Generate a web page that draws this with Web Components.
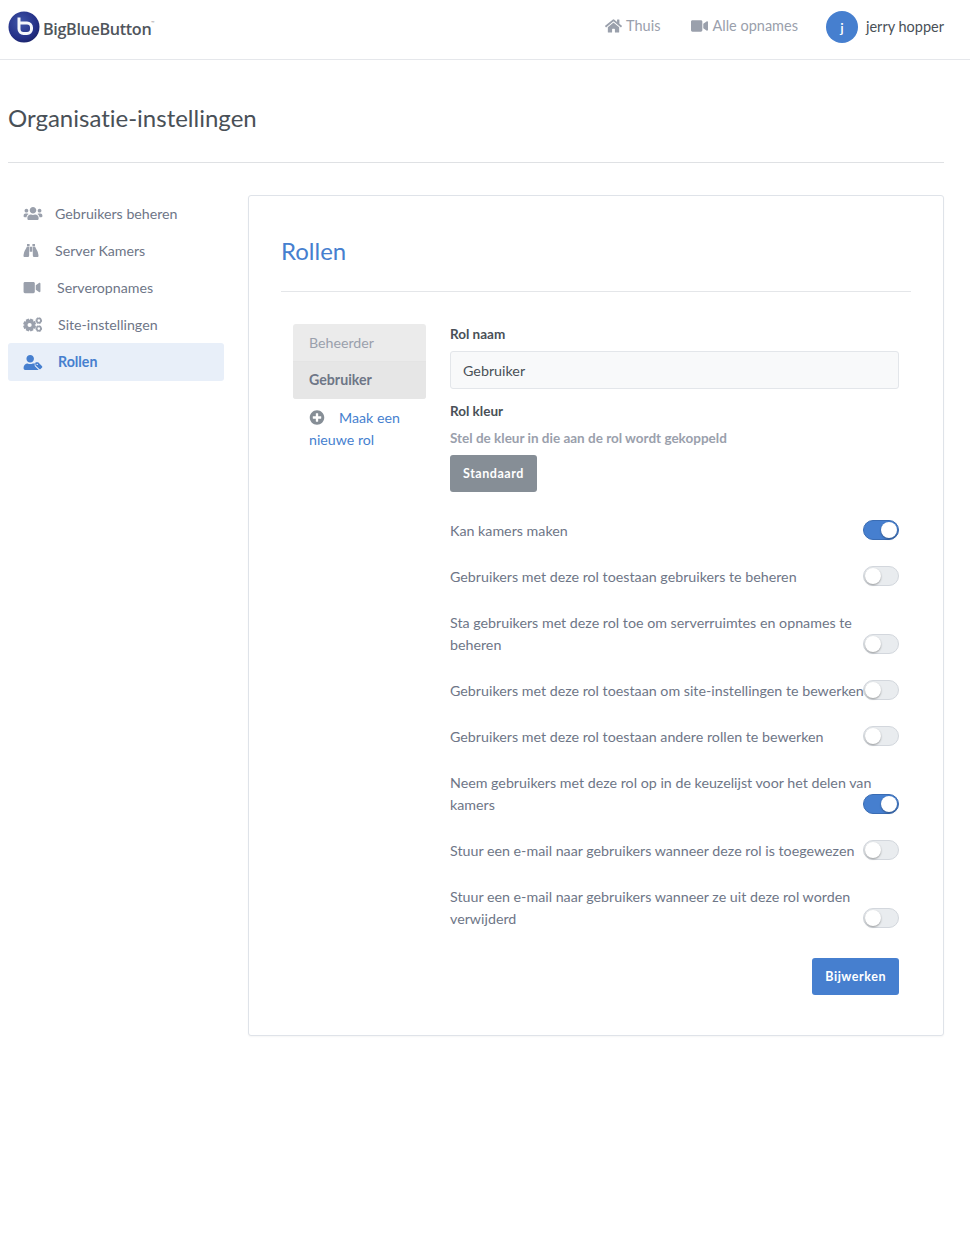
<!DOCTYPE html>
<html lang="nl"><head><meta charset="utf-8"><title>Organisatie-instellingen</title>
<style>
html,body{margin:0;padding:0;background:#fff}
body{font-family:"Lato","Open Sans","Liberation Sans",sans-serif;font-size:14.2px;line-height:22px;color:#495057;height:1237px;font-variant-ligatures:none}
</style></head><body>
<bbb-header></bbb-header>
<bbb-page></bbb-page>
<script>
const P={
 home:['0 0 576 512','M280.37 148.26L96 300.11V464a16 16 0 0 0 16 16l112.06-.29a16 16 0 0 0 15.92-16V368a16 16 0 0 1 16-16h64a16 16 0 0 1 16 16v95.64a16 16 0 0 0 16 16.05L464 480a16 16 0 0 0 16-16V300L295.67 148.26a12.19 12.19 0 0 0-15.3 0zM571.6 251.47L488 182.56V44.05a12 12 0 0 0-12-12h-56a12 12 0 0 0-12 12v72.61L318.47 43a48 48 0 0 0-61 0L4.34 251.47a12 12 0 0 0-1.6 16.9l25.5 31A12 12 0 0 0 45.15 301l235.22-193.74a12.19 12.19 0 0 1 15.3 0L530.9 301a12 12 0 0 0 16.9-1.6l25.5-31a12 12 0 0 0-1.7-16.93z'],
 video:['0 0 576 512','M336.2 64H47.8C21.4 64 0 85.4 0 111.8v288.4C0 426.6 21.4 448 47.8 448h288.4c26.4 0 47.8-21.4 47.8-47.8V111.8c0-26.4-21.4-47.8-47.8-47.8zm189.4 37.7L416 177.3v157.4l109.6 75.5c21.2 14.6 50.4-.3 50.4-25.8V127.5c0-25.4-29.1-40.4-50.4-25.8z'],
 users:['0 0 640 512','M96 224c35.3 0 64-28.7 64-64s-28.7-64-64-64-64 28.7-64 64 28.7 64 64 64zm448 0c35.3 0 64-28.7 64-64s-28.7-64-64-64-64 28.7-64 64 28.7 64 64 64zm32 32h-64c-17.6 0-33.5 7.1-45.1 18.6 40.3 22.1 68.9 62 75.1 109.4h66c17.7 0 32-14.3 32-32v-32c0-35.3-28.7-64-64-64zm-256 0c61.9 0 112-50.1 112-112S381.9 32 320 32 208 82.1 208 144s50.1 112 112 112zm76.8 32h-8.3c-20.8 10-43.9 16-68.5 16s-47.6-6-68.5-16h-8.3C179.6 288 128 339.6 128 403.2V432c0 26.5 21.5 48 48 48h288c26.5 0 48-21.5 48-48v-28.8c0-63.6-51.6-115.2-115.2-115.2zm-223.7-13.4C161.5 263.1 145.6 256 128 256H64c-35.3 0-64 28.7-64 64v32c0 17.7 14.3 32 32 32h65.9c6.3-47.4 34.9-87.3 75.2-109.4z'],
 binoculars:['0 0 512 512','M120 30h88v80h-88zM304 30h88v80h-88zM214 130h84v170h-84zM112 130h84v70c0 20-2 110-2 220 0 24-16 62-44 62H40c-24 0-40-16-40-40 0-30 10-80 28-140 20-66 70-110 84-172zM316 130h84c14 62 64 106 84 172 18 60 28 110 28 140 0 24-16 40-40 40H362c-28 0-44-38-44-62 0-110-2-200-2-220z'],
 plus:['0 0 512 512','M256 8C119 8 8 119 8 256s111 248 248 248 248-111 248-248S393 8 256 8zm144 276c0 6.6-5.4 12-12 12h-92v92c0 6.6-5.4 12-12 12h-56c-6.6 0-12-5.4-12-12v-92h-92c-6.6 0-12-5.4-12-12v-56c0-6.6 5.4-12 12-12h92v-92c0-6.6 5.4-12 12-12h56c6.6 0 12 5.4 12 12v92h92c6.6 0 12 5.4 12 12v56z'],
 usertag:['0 0 640 512','M224 256c70.7 0 128-57.3 128-128S294.7 0 224 0 96 57.3 96 128s57.3 128 128 128zM417 288H313c-27 14-57 22-89 22s-62-8-89-22h-1C60 288 0 348 0 422v42c0 26.5 21.5 48 48 48h480c-8 0-16-4-22-10L395 391c-12-12-18-28-18-45v-20c0-14 16-38 40-38zM630 385L505 260c-6-6-14-9-22-9H432c-18 0-32 14-32 32v51c0 8 3 16 9 22l125 125c12 12 32 12 44 0l52-52c12-12 12-32 0-44zM464 344a24 24 0 1 1 0-48 24 24 0 0 1 0 48z']
};
const svgIcon=(n,w,h)=>`<svg width="${w}" height="${h}" viewBox="${P[n][0]}" fill="currentColor" aria-hidden="true"><path fill-rule="evenodd" d="${P[n][1]}"/></svg>`;
function gear(cx,cy,ro,ri,hole,teeth,rot=0){
 let d='';const st=Math.PI*2/teeth;
 for(let k=0;k<teeth;k++){const a=k*st+rot;
  [[ri,-.5],[ro,-.3],[ro,.3],[ri,.5]].forEach(([r,f],j)=>{const t=a+f*st;d+=(k===0&&j===0?'M':'L')+(cx+r*Math.cos(t)).toFixed(2)+' '+(cy+r*Math.sin(t)).toFixed(2)});
 }
 d+=`zM${cx+hole} ${cy}a${hole} ${hole} 0 1 0 ${-2*hole} 0a${hole} ${hole} 0 1 0 ${2*hole} 0z`;
 return d;
}
const cogs=(w,h)=>`<svg width="${w}" height="${h}" viewBox="0 0 20 15" fill="currentColor" aria-hidden="true"><path fill-rule="evenodd" d="${gear(6.6,8,6.6,4.9,2.1,8,.39)}${gear(15.8,3.6,3.4,2.6,1.3,6)}${gear(15.8,11.6,3.4,2.6,1.3,6)}"/></svg>`;

class Base extends HTMLElement{
 constructor(){super();this.attachShadow({mode:'open'})}
 connectedCallback(){this.render()}
}
customElements.define('bbb-logo',class extends Base{render(){this.shadowRoot.innerHTML=`<style>
:host{display:flex;align-items:center;gap:3px}
span{font:600 16.2px/1 "Open Sans","Liberation Sans",sans-serif;color:#50555c;letter-spacing:-.35px;position:relative;top:2px}
sup{font-size:4px;color:#888;vertical-align:top}
</style>
<svg width="32" height="32" viewBox="0 0 32 32" aria-hidden="true"><defs><radialGradient id="g" cx=".4" cy=".35" r=".8"><stop offset="0" stop-color="#3f55a8"/><stop offset=".65" stop-color="#232f86"/><stop offset="1" stop-color="#141c58"/></radialGradient></defs><circle cx="16" cy="16" r="15.5" fill="url(#g)"/><path d="M11 6.5v11.5a4.5 4.5 0 0 0 4.5 4.5h3.5a4.5 4.5 0 0 0 4.5-4.5v-1.5a4.5 4.5 0 0 0-4.5-4.5h-8" fill="none" stroke="#f4f6fb" stroke-width="3"/></svg>
<span>BigBlueButton<sup>™</sup></span>`}});
customElements.define('bbb-nav-item',class extends Base{render(){const i=this.getAttribute('icon');this.shadowRoot.innerHTML=`<style>
:host{display:flex;align-items:center;gap:4px;color:#9aa0ac;font-size:14.5px;margin-top:-3px}
svg{display:block}
</style>${svgIcon(i,17,16)}<slot></slot>`}});
customElements.define('bbb-avatar',class extends Base{render(){this.shadowRoot.innerHTML=`<style>
:host{display:flex;align-items:center;gap:8px;color:#495057;font-size:14.5px}
i{width:32px;height:32px;border-radius:50%;background:#467fcf;color:#fff;display:flex;align-items:center;justify-content:center;font:600 14px Lato,sans-serif}
</style><i>${this.getAttribute('letter')}</i><slot></slot>`}});
customElements.define('bbb-header',class extends Base{render(){this.shadowRoot.innerHTML=`<style>
:host{display:flex;align-items:center;justify-content:space-between;box-sizing:border-box;height:60px;padding:0 26px 5px 8px;border-bottom:1px solid #e5e7eb}
nav{display:flex;align-items:center}
bbb-nav-item{margin-right:31px}
bbb-nav-item+bbb-nav-item{margin-right:28px}
</style><bbb-logo></bbb-logo><nav><bbb-nav-item icon="home">Thuis</bbb-nav-item><bbb-nav-item icon="video">Alle opnames</bbb-nav-item><bbb-avatar letter="j">jerry hopper</bbb-avatar></nav>`}});
customElements.define('bbb-side-item',class extends Base{render(){
 const a=this.hasAttribute('active'),i=this.getAttribute('icon'),gap=this.getAttribute('gap'),w=+this.getAttribute('w');
 const ic=i==='cogs'?cogs(w,15):svgIcon(i,w,15);
 this.shadowRoot.innerHTML=`<style>
:host{display:flex;align-items:center;height:37px;box-sizing:border-box;padding-left:15px;border-radius:3px;color:#6e7687;font-size:14.2px}
:host([active]){height:38px;background:#e8eff9;color:#467fcf;font-weight:700}
svg{display:block;flex:none;margin-right:${gap}px;color:${a?'#467fcf':'#9aa0ac'}}
</style>${ic}<slot></slot>`}});
customElements.define('bbb-sidebar',class extends Base{render(){this.shadowRoot.innerHTML=`<style>:host{display:block;width:216px;flex:none}</style>
<bbb-side-item icon="users" w="20" gap="12">Gebruikers beheren</bbb-side-item>
<bbb-side-item icon="binoculars" w="16" gap="16">Server Kamers</bbb-side-item>
<bbb-side-item icon="video" w="18" gap="16">Serveropnames</bbb-side-item>
<bbb-side-item icon="cogs" w="20" gap="15">Site-instellingen</bbb-side-item>
<bbb-side-item icon="usertag" w="20" gap="15" active>Rollen</bbb-side-item>`}});
customElements.define('bbb-role-list',class extends Base{render(){this.shadowRoot.innerHTML=`<style>
:host{display:block;width:133px;flex:none;font-size:14.2px}
.l{border-radius:3px;overflow:hidden;background:#ebebeb}
.r{height:37px;padding:0 0 0 16px;box-sizing:border-box;display:flex;align-items:center;color:#9aa0ac}
.r.s{height:38px;padding-bottom:2px;background:#e6e6e6;color:#6e7687;font-weight:700;border-top:1px solid #e4e4e4}
.add{display:block;padding:8px 16px 0;color:#467fcf;line-height:22px}
svg{display:inline-block;vertical-align:-2px;color:#868e96;margin-right:14px}
</style><div class="l"><div class="r">Beheerder</div><div class="r s">Gebruiker</div></div>
<a class="add">${svgIcon('plus',16,15)}Maak een nieuwe rol</a>`}});
customElements.define('bbb-toggle-row',class extends Base{render(){const on=this.hasAttribute('on');this.shadowRoot.innerHTML=`<style>
:host{display:block;position:relative;padding-top:1px;margin-bottom:23px;color:#6e7687;font-size:14.25px;line-height:22px}
.t{position:absolute;right:0;bottom:2px;width:36px;height:20px;box-sizing:border-box;border-radius:10px;background:${on?'#467fcf':'#e9ecef'};border:1px solid ${on?'#3a6cb3':'#d3d7dd'}}
.t::after{content:"";position:absolute;top:1px;${on?'right:1px':'left:1px'};width:16px;height:16px;border-radius:50%;background:#fff;box-shadow:0 1px 2px rgba(0,0,0,.35)}
</style><slot></slot><span class="t"></span>`}});
customElements.define('bbb-button',class extends Base{render(){this.shadowRoot.innerHTML=`<style>
:host{display:inline-flex;align-items:center;justify-content:center;height:37px;padding:0 13px;box-sizing:border-box;border-radius:3px;background:${this.getAttribute('bg')};color:#fff;font-weight:700;font-size:12.5px;letter-spacing:.55px}
</style><slot></slot>`}});
customElements.define('bbb-role-form',class extends Base{render(){this.shadowRoot.innerHTML=`<style>
:host{display:block;flex:1;min-width:0}
.lab{font-weight:700;color:#495057;font-size:13.5px;line-height:21px}
.inp{box-sizing:border-box;height:38px;margin:6px 0 12px;padding:1px 12px 0;display:flex;align-items:center;background:#f8f9fa;border:1px solid #e3e6ea;border-radius:3px;font-size:14.3px;color:#495057}
.hint{font-weight:700;color:#9aa0ac;font-size:13.5px;line-height:22px;margin:5px 0 6px}
.rows{margin-top:27px}
.foot{display:flex;justify-content:flex-end;margin-top:28px}
</style>
<div class="lab">Rol naam</div><div class="inp">Gebruiker</div>
<div class="lab">Rol kleur</div><div class="hint">Stel de kleur in die aan de rol wordt gekoppeld</div>
<bbb-button bg="#868e96">Standaard</bbb-button>
<div class="rows">
<bbb-toggle-row on>Kan kamers maken</bbb-toggle-row>
<bbb-toggle-row>Gebruikers met deze rol toestaan gebruikers te beheren</bbb-toggle-row>
<bbb-toggle-row>Sta gebruikers met deze rol toe om serverruimtes en opnames te<br>beheren</bbb-toggle-row>
<bbb-toggle-row>Gebruikers met deze rol toestaan om site-instellingen te bewerken</bbb-toggle-row>
<bbb-toggle-row>Gebruikers met deze rol toestaan andere rollen te bewerken</bbb-toggle-row>
<bbb-toggle-row on>Neem gebruikers met deze rol op in de keuzelijst voor het delen van<br>kamers</bbb-toggle-row>
<bbb-toggle-row>Stuur een e-mail naar gebruikers wanneer deze rol is toegewezen</bbb-toggle-row>
<bbb-toggle-row>Stuur een e-mail naar gebruikers wanneer ze uit deze rol worden<br>verwijderd</bbb-toggle-row>
</div>
<div class="foot"><bbb-button bg="#467fcf">Bijwerken</bbb-button></div>`}});
customElements.define('bbb-card',class extends Base{render(){this.shadowRoot.innerHTML=`<style>
:host{display:block;flex:1;min-width:0;box-sizing:border-box;height:841px;padding:39px 32px 0;background:#fff;border:1px solid #dfe3e9;border-radius:3px;box-shadow:0 1px 2px rgba(0,0,0,.04)}
h3{margin:0;font-weight:400;font-size:24px;line-height:32px;color:#467fcf}
hr{border:0;border-top:1px solid #e4e6e9;margin:24px 0 32px}
.b{display:flex;gap:24px;padding:0 12px}
</style><h3>Rollen</h3><hr><div class="b"><bbb-role-list></bbb-role-list><bbb-role-form></bbb-role-form></div>`}});
customElements.define('bbb-page',class extends Base{render(){this.shadowRoot.innerHTML=`<style>
:host{display:block;padding:0 26px 0 8px}
h1{margin:0;padding-top:42px;font-weight:400;font-size:24px;line-height:32px;color:#495057}
hr{border:0;border-top:1px solid #dfe1e4;margin:28px 0 32px}
.m{display:flex;gap:24px}
</style><h1>Organisatie-instellingen</h1><hr><div class="m"><bbb-sidebar></bbb-sidebar><bbb-card></bbb-card></div>`}});
</script>
</body></html>
